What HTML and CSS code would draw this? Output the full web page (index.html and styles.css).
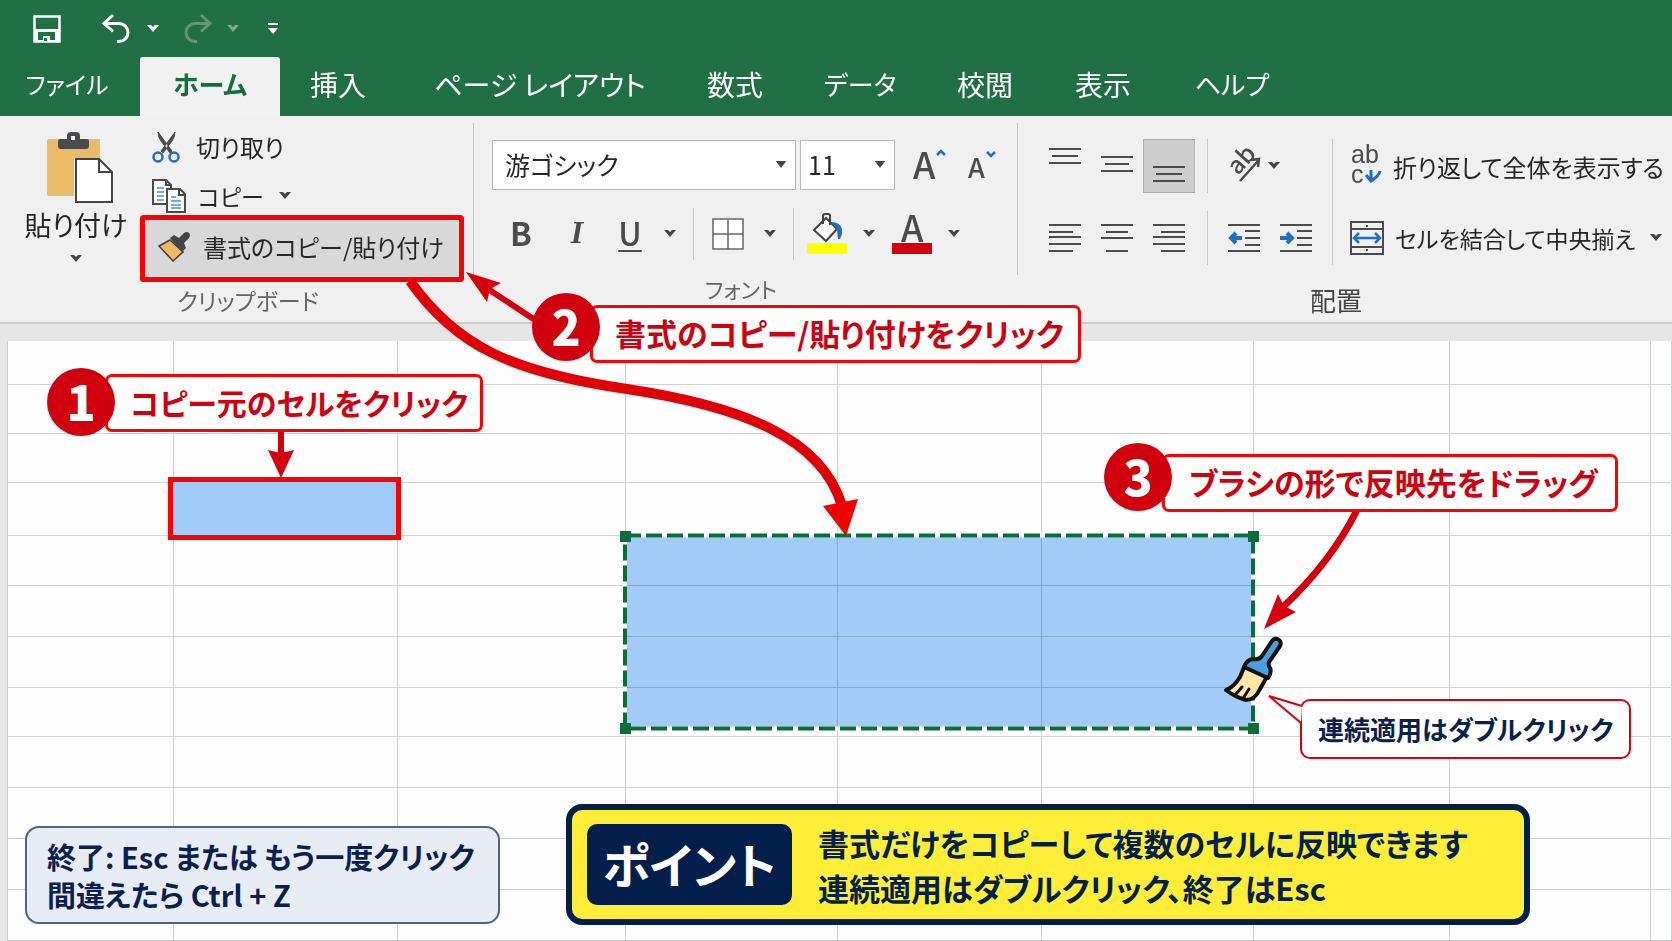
FILE: index.html
```html
<!DOCTYPE html>
<html lang="ja">
<head>
<meta charset="utf-8">
<title>書式のコピー/貼り付け</title>
<link rel="stylesheet" href="styles.css">
</head>
<body>
<div class="app">
  <header class="titlebar">
    <div class="quick">
      <button class="plain" aria-label="上書き保存"><svg width="30" height="30" viewBox="0 0 30 30"><path d="M2.500 2.500h25v25h-25z" fill="none" stroke="#fff" stroke-width="2.500"/><path d="M2 15h26v13H2z" fill="#fff"/><path d="M6 18h17v4H6zM6 22h5v4H6zM18 22h5v4h-5zM12 24h3v3h-3z" fill="#217045"/></svg></button>
      <button class="plain undo" aria-label="元に戻す"><svg width="30" height="30" viewBox="0 0 30 30" fill="none" stroke="#fff" stroke-width="3"><path d="M12 1 3 9.500l9 8M4 9.500h14a9 9 0 0 1 0 18h-2"/></svg></button>
      <button class="plain" aria-label="元に戻すの一覧"><svg class="chev" viewBox="0 0 12 8"><path d="M0 0h4l2 2 2-2h4L6 7z" fill="#fff"/></svg></button>
      <button class="plain redo" aria-label="やり直し"><svg width="30" height="30" viewBox="0 0 30 30" fill="none" stroke="#629777" stroke-width="3"><path d="m18 1 9 8.500-9 8M26 9.500H12a9 9 0 0 0 0 18h2"/></svg></button>
      <button class="plain" aria-label="やり直しの一覧"><svg class="chev" viewBox="0 0 12 8"><path d="M0 0h4l2 2 2-2h4L6 7z" fill="#7ba88d"/></svg></button>
      <button class="plain custom" aria-label="カスタマイズ"><svg width="12" height="12" viewBox="0 0 12 12" fill="#fff"><path d="M1 0h10v2H1zM1 5h10l-5 6z"/></svg></button>
    </div>
    <nav class="tabs">
      <a href="#" class="t1">ファイル</a><a href="#" class="active">ホーム</a><a href="#" class="t3">挿入</a><a href="#" class="t4">ページ レイアウト</a><a href="#" class="t5">数式</a><a href="#" class="t6">データ</a><a href="#" class="t7">校閲</a><a href="#" class="t8">表示</a><a href="#" class="t9">ヘルプ</a>
    </nav>
  </header>

  <section class="ribbon">
    <div class="group clipboard">
      <button class="paste"><svg width="68" height="72" viewBox="0 0 68 72"><path d="M3 8h50q1 0 1 1v18H28v38H3q-2 0-2-2V10q0-2 2-2z" fill="#eabb68"/><path d="M14 8h7V5q0-4 4-4h5q4 0 4 4v3h7q2 0 2 2v5q0 3-3 3H15q-3 0-3-3v-5q0-2 2-2z" fill="#4b4a4c"/><path d="M25 5h4v4h-4z" fill="#f0f0f0"/><path d="M30 28h23l13 13v30H30z" fill="#fff" stroke="#444" stroke-width="2"/><path d="M53 28v13h13" fill="none" stroke="#444" stroke-width="2"/></svg><span>貼り付け</span><svg class="chev" viewBox="0 0 12 8"><path d="M0 0h4l2 2 2-2h4L6 7z" fill="#444"/></svg></button>
      <div class="clips">
        <button class="clip cut"><svg width="28" height="32" viewBox="0 0 28 32"><path d="M6 1q0 5 3 9l9 12 2-2L6 1zM23 1q0 5-3 9l-9 12-2-2L23 1z" fill="#4b4b4b" stroke="#4b4b4b"/><circle cx="6" cy="26" r="4.500" fill="none" stroke="#1f70c1" stroke-width="2.500"/><circle cx="22" cy="26" r="4.500" fill="none" stroke="#1f70c1" stroke-width="2.500"/></svg>切り取り</button>
        <button class="clip copy"><svg width="34" height="34" viewBox="0 0 34 34" stroke="#4b4b4b" stroke-width="2"><path d="M1 1h13l5 5v19H1z" fill="#fff"/><path d="M14 1v5h5" fill="none"/><path d="M15 10h13l5 5v18H15z" fill="#fff"/><path d="M27 10v6h6" fill="none"/><path d="M5 9h7M5 13h7M5 17h7M5 21h7M19 18h5M19 22h10M19 26h10M19 29h10" stroke="#4a90d0" stroke-width="1.500"/></svg>コピー<svg class="chev" viewBox="0 0 12 8"><path d="M0 0h4l2 2 2-2h4L6 7z" fill="#444"/></svg></button>
        <button class="clip painter"><svg width="34" height="32" viewBox="0 0 34 32"><path d="m2 15 11-6 13 12-10 9z" fill="#edb964" stroke="#3d3d3d" stroke-width="1.500"/><path d="m13 7 4-3 5 3 5-5q3-2 5 0t0 5l-5 5 2 5-4 4z" fill="#454346"/></svg>書式のコピー/貼り付け</button>
      </div>
      <div class="label">クリップボード</div>
    </div>

    <div class="group font">
      <div class="row r1">
        <button class="combo name">游ゴシック<svg class="tri" viewBox="0 0 12 8"><path d="M0 0h12L6 8z" fill="#444"/></svg></button>
        <button class="combo size">11<svg class="tri" viewBox="0 0 12 8"><path d="M0 0h12L6 8z" fill="#444"/></svg></button>
        <button class="plain grow" aria-label="フォント サイズの拡大"><svg width="34" height="34" viewBox="0 0 34 34"><text x="1" y="31" font-size="36">A</text><path d="m25 7 4-4 4 4" fill="none" stroke="#1f70c1" stroke-width="2.500"/></svg></button>
        <button class="plain shrink" aria-label="フォント サイズの縮小"><svg width="30" height="30" viewBox="0 0 30 30"><text x="1" y="28" font-size="27">A</text><path d="m20 2 4 4 4-4" fill="none" stroke="#1f70c1" stroke-width="2.500"/></svg></button>
      </div>
      <div class="row r2">
        <button class="plain glyph bold">B</button>
        <button class="plain glyph ital">I</button>
        <button class="plain glyph under">U</button>
        <button class="plain c1" aria-label="下線の種類"><svg class="chev" viewBox="0 0 12 8"><path d="M0 0h4l2 2 2-2h4L6 7z" fill="#444"/></svg></button>
        <i class="sep"></i>
        <button class="plain grid" aria-label="罫線"><svg width="32" height="32" viewBox="0 0 32 32" fill="#fff" stroke="#666" stroke-width="1.500"><path d="M1 1h30v30H1zM16 1v30M1 16h30"/></svg></button>
        <button class="plain" aria-label="罫線の種類"><svg class="chev" viewBox="0 0 12 8"><path d="M0 0h4l2 2 2-2h4L6 7z" fill="#444"/></svg></button>
        <i class="sep"></i>
        <button class="plain fill" aria-label="塗りつぶしの色"><svg width="42" height="42" viewBox="0 0 42 42"><path d="M1 30h40v11H1z" fill="#ff0"/><path d="M8 17 20 5l11 11-11 12z" fill="#fff" stroke="#444" stroke-width="2"/><path d="M17 11V3q0-2 2-2h3q2 0 2 2v9" fill="none" stroke="#444" stroke-width="2"/><path d="M25 9q9 0 11 7v5l-2 5h-2l-1-10z" fill="#1f70c1"/></svg></button>
        <button class="plain" aria-label="塗りつぶしの色の一覧"><svg class="chev" viewBox="0 0 12 8"><path d="M0 0h4l2 2 2-2h4L6 7z" fill="#444"/></svg></button>
        <button class="plain color" aria-label="フォントの色"><svg width="42" height="42" viewBox="0 0 42 42"><text x="10" y="29" font-size="36">A</text><path d="M1 30h40v11H1z" fill="#d4000f"/></svg></button>
        <button class="plain" aria-label="フォントの色の一覧"><svg class="chev" viewBox="0 0 12 8"><path d="M0 0h4l2 2 2-2h4L6 7z" fill="#444"/></svg></button>
      </div>
      <div class="label">フォント</div>
    </div>

    <div class="group align">
      <div class="cols">
        <div class="aligns">
          <button class="plain box" aria-label="上揃え"><svg width="32" height="44" viewBox="0 0 32 44" stroke="#4b4b4b" stroke-width="2"><path d="M0 5h32M3 12h26M0 19h32"/></svg></button>
          <button class="plain box" aria-label="上下中央揃え"><svg width="32" height="44" viewBox="0 0 32 44" stroke="#4b4b4b" stroke-width="2"><path d="M0 13h32M4 20h24M0 27h32"/></svg></button>
          <button class="plain box on" aria-label="下揃え"><svg width="32" height="44" viewBox="0 0 32 44" stroke="#4b4b4b" stroke-width="2"><path d="M0 23h32M3 30h26M0 37h32"/></svg></button>
          <button class="plain box" aria-label="左揃え"><svg width="32" height="30" viewBox="0 0 32 30" stroke="#4b4b4b" stroke-width="2"><path d="M0 2h32M0 9h24M0 14h32M0 21h32M0 28h24"/></svg></button>
          <button class="plain box" aria-label="中央揃え"><svg width="32" height="30" viewBox="0 0 32 30" stroke="#4b4b4b" stroke-width="2"><path d="M0 2h32M5 9h22M0 15h32M5 28h22"/></svg></button>
          <button class="plain box" aria-label="右揃え"><svg width="32" height="30" viewBox="0 0 32 30" stroke="#4b4b4b" stroke-width="2"><path d="M0 2h32M8 9h24M0 14h32M0 21h32M8 28h24"/></svg></button>
        </div>
        <div class="indents">
          <div class="cell"><button class="plain" aria-label="方向"><svg width="34" height="34" viewBox="0 0 34 34"><text x="0" y="0" font-size="24" transform="translate(10 27) rotate(-48)">ab</text><path d="m12 32 18-20M23 11l8-1-1 8" fill="none" stroke="#4b4b4b" stroke-width="2.500"/></svg></button><button class="plain" aria-label="方向の一覧"><svg class="chev" viewBox="0 0 12 8"><path d="M0 0h4l2 2 2-2h4L6 7z" fill="#444"/></svg></button></div>
          <div class="cell low"><button class="plain" aria-label="インデントを減らす"><svg width="32" height="30" viewBox="0 0 32 30" fill="none" stroke="#4b4b4b" stroke-width="2"><path d="M0 2h32M17 8h15M17 15h15M17 22h15M0 28h32"/><path d="M14 15H2M8 10l-5 5 5 5" stroke="#1f70c1" stroke-width="4"/></svg></button><button class="plain" aria-label="インデントを増やす"><svg width="32" height="30" viewBox="0 0 32 30" fill="none" stroke="#4b4b4b" stroke-width="2"><path d="M0 2h32M17 8h15M17 15h15M17 22h15M0 28h32"/><path d="M0 15h12M7 10l5 5-5 5" stroke="#1f70c1" stroke-width="4"/></svg></button></div>
        </div>
        <div class="wraps">
          <button class="wide"><svg width="32" height="40" viewBox="0 0 32 40"><text class="abc" font-size="25"><tspan x="1" y="17">ab</tspan><tspan x="1" y="37">c</tspan></text><path d="M21 24v11M30 25q-1 5-9 10l-5-6" fill="none" stroke="#1f70c1" stroke-width="3"/></svg>折り返して全体を表示する</button>
          <button class="wide merge"><svg width="34" height="34" viewBox="0 0 34 34" fill="none" stroke="#4b4b4b" stroke-width="2"><path d="M1 1h32v32H1zM1 8h32M1 26h32M17 4v2M17 28v2"/><path d="M5 17h24M9 12l-5 5 5 5M25 12l5 5-5 5" stroke="#1f70c1" stroke-width="2.500"/></svg>セルを結合して中央揃え<svg class="chev" viewBox="0 0 12 8"><path d="M0 0h4l2 2 2-2h4L6 7z" fill="#444"/></svg></button>
        </div>
      </div>
      <div class="label dark">配置</div>
    </div>
  </section>

  <main class="sheet">
    <table class="cells" aria-label="ワークシート">
      <colgroup><col class="w1"><col class="w2"><col class="w3"><col class="w4"><col class="w5"><col class="w4"><col class="w6"><col class="w7"><col></colgroup>
      <tr class="h43"><td><td><td><td><td><td><td><td><td></tr>
      <tr class="h49"><td><td><td><td><td><td><td><td><td></tr>
      <tr class="h49"><td><td><td><td><td><td><td><td><td></tr>
      <tr class="h53"><td><td><td><td><td><td><td><td><td></tr>
      <tr class="h50"><td><td><td><td><td><td><td><td><td></tr>
      <tr class="h51"><td><td><td><td><td><td><td><td><td></tr>
      <tr class="h51"><td><td><td><td><td><td><td><td><td></tr>
      <tr class="h49"><td><td><td><td><td><td><td><td><td></tr>
      <tr class="h51"><td><td><td><td><td><td><td><td><td></tr>
      <tr class="h51"><td><td><td><td><td><td><td><td><td></tr>
      <tr class="h51"><td><td><td><td><td><td><td><td><td></tr>
      <tr class="h51"><td><td><td><td><td><td><td><td><td></tr>
    </table>
  </main>

  <div class="range"></div>
  <svg class="ink" width="1672" height="941" viewBox="0 0 1672 941" aria-hidden="true">
    <rect x="625" y="535.500" width="628" height="193" fill="none" stroke="#fff" stroke-width="4"/>
    <rect x="625" y="535.500" width="628" height="193" fill="none" stroke="#0a6d3a" stroke-width="4" stroke-dasharray="16 5"/>
    <path d="M620 531h11v11h-11zM1248 531h11v11h-11zM620 723h11v11h-11zM1248 723h11v11h-11z" fill="#0a6d3a"/>
    <rect x="170.500" y="479.500" width="228" height="58" fill="#a1cbf7" stroke="#f00" stroke-width="5"/>
    <rect x="142.500" y="217.500" width="319" height="62" rx="1" fill="none" stroke="#f00" stroke-width="5"/>
    <path d="M410 281C455 345 510 372 627 389 740 406 822 437 842 506" fill="none" stroke="#df0008" stroke-width="10"/>
    <path d="m823 506 35-7-12 37z" fill="#f00000"/>
    <path d="m488 289 50 33" stroke="#d4000f" stroke-width="6"/>
    <path d="m466 272 35 11-11 6-3 13z" fill="#d4000f"/>
    <path d="M281 430v24" stroke="#d4000f" stroke-width="6"/>
    <path d="m268 450 13 3 13-3-13 28z" fill="#d4000f"/>
    <path d="M1357 510q-26 52-74 97" fill="none" stroke="#d4000f" stroke-width="7"/>
    <path d="m1264 629 14-35 6 12 12 6z" fill="#d4000f"/>
  </svg>

  <div class="callout one"><b>1</b><span>コピー元のセルをクリック</span></div>
  <div class="callout two"><b>2</b><span>書式のコピー/貼り付けをクリック</span></div>
  <div class="callout three"><b>3</b><span>ブラシの形で反映先をドラッグ</span></div>

  <div class="bubble">連続適用はダブルクリック<svg width="36" height="32" viewBox="0 0 36 32"><path d="M35 12 2 2l32 27" fill="#fff" stroke="#d4000f" stroke-width="2"/></svg></div>
  <svg class="brush" width="60" height="68" viewBox="0 0 60 68" stroke="#111" stroke-linejoin="round" stroke-linecap="round"><path d="M22 29 17 41Q11 51 3 54q9 7 20 10 9 0 14-11l8-14z" fill="#fbe6a5" stroke-width="4"/><path d="m13 58 6-7M21 61l5-8" fill="none" stroke-width="3"/><path d="M21 31q3-8 10-8 5 1 8-3L49 5q3-4 7-1 3 2 1 6L46 26q-1 3 1 6 2 4-2 10z" fill="#4a9fe3" stroke-width="4"/></svg>

  <aside class="note">終了: Esc または もう一度クリック<br>間違えたら Ctrl + Z</aside>
  <aside class="point"><strong>ポイント</strong><p>書式だけをコピーして複数のセルに反映できます<br>連続適用はダブルクリック、終了はEsc</p></aside>
</div>
</body>
</html>
```
FILE: styles.css
```css
* { box-sizing: border-box; }
body { margin: 0; background: #e6e6e6; color: #262626; font-family: "Noto Sans CJK JP", "Noto Sans", sans-serif; font-feature-settings: "palt"; }
button { font: inherit; font-feature-settings: inherit; color: inherit; background: none; border: 0; padding: 0; cursor: pointer; }
svg { display: block; flex: none; overflow: visible; }
svg text { fill: #4b4b4b; font-family: "Noto Sans CJK JP", sans-serif; font-weight: 500; }
svg .abc { font-family: "Liberation Sans", sans-serif; }
.app { position: relative; min-height: 100vh; overflow: hidden; display: flex; flex-direction: column; }
.plain { display: flex; align-items: center; justify-content: center; }
.chev { width: 12px; height: 8px; }
.tri { width: 12px; height: 7px; margin-left: auto; }

.titlebar { background: #217045; color: #fff; }
.quick { display: flex; align-items: center; height: 57px; padding-left: 32px; }
.undo { margin: 0 16px 0 39px; }
.redo { margin: 0 14px 0 24px; }
.custom { margin-left: 28px; }
.tabs { display: flex; height: 59px; font-size: 26px; }
.tabs a { display: flex; align-items: center; justify-content: center; padding-bottom: 6px; color: inherit; text-decoration: none; white-space: nowrap; }
.tabs .active { width: 140px; background: #f1f1f1; color: #12703f; font-weight: 700; border-radius: 3px 3px 0 0; }
.tabs .t1 { width: 140px; padding-right: 6px; font-size: 24px; }
.t3 { width: 116px; }
.t4 { width: 288px; }
.t5 { width: 102px; }
.t6 { width: 148px; }
.t7 { width: 102px; }
.t8 { width: 134px; }
.t9 { width: 124px; }
.t3, .t4, .t5, .t7, .t8 { font-size: 28px; }

.ribbon { display: flex; height: 208px; background: #f0f0f0; border-bottom: 2px solid #c8c8c8; }
.group { position: relative; display: flex; flex-direction: column; }
.group::after { content: ""; position: absolute; right: 0; top: 7px; width: 1px; height: 152px; background: #c4c4c4; }
.label { position: absolute; bottom: 6px; left: 0; right: 0; text-align: center; font-size: 23px; line-height: 32px; color: #666; }
.label.dark { color: #444; font-size: 26px; }
.clipboard { flex-direction: row; width: 474px; }
.clipboard .label { padding-left: 22px; }
.paste { display: flex; flex-direction: column; align-items: center; width: 140px; padding: 15px 0 0 12px; font-size: 27px; line-height: 36px; }
.paste span { margin-top: 4px; }
.paste svg:first-child { margin-left: 8px; }
.paste .chev { margin-top: 12px; }
.clips { display: flex; flex-direction: column; padding-top: 6px; }
.clip { display: flex; align-items: center; font-size: 24px; white-space: nowrap; height: 49px; }
.cut, .copy { padding-left: 12px; gap: 16px; }
.copy { gap: 12px; font-size: 23px; }
.copy .chev { margin-left: 3px; }
.painter { height: 57px; width: 316px; margin-left: 3px; padding: 0 0 4px 14px; gap: 12px; background: #d8d8d8; }

.font { width: 544px; padding: 24px 0 0 18px; }
.row { display: flex; align-items: center; }
.combo { display: flex; align-items: center; height: 50px; background: #fff; border: 1px solid #bbb; font-size: 25px; padding: 0 8px 2px 12px; }
.name { width: 304px; }
.size { width: 95px; margin-left: 4px; padding-left: 7px; }
.grow { margin-left: 17px; }
.shrink { margin-left: 21px; }
.r2 { height: 52px; margin-top: 18px; }
.glyph { font: 700 32px/40px "Noto Sans CJK JP", sans-serif; color: #4b4b4b; width: 24px; padding-bottom: 4px; }
.bold { margin-left: 17px; }
.ital { font-family: "Liberation Serif", serif; font-style: italic; margin-left: 32px; }
.under { text-decoration: underline; text-decoration-thickness: 2px; text-underline-offset: 4px; margin-left: 29px; font-weight: 500; }
.c1 { margin-left: 22px; }
.sep { width: 1px; height: 52px; background: #c4c4c4; margin: 0 18px 0 17px; }
.fill { margin-left: -6px; }
.fill, .color { margin-right: 15px; }
.color { margin-left: 16px; }
.grid { margin-right: 20px; }
.font .label { bottom: 18px; padding-right: 10px; font-size: 22px; }

.align { flex: 1; padding: 23px 0 0 21px; }
.align::after { display: none; }
.cols { display: flex; }
.aligns { display: grid; grid-template-columns: 52px 52px 52px; grid-template-rows: 54px 54px; row-gap: 18px; }
.box { height: 54px; }
.on { background: #cdcdcd; border: 1px solid #b0b0b0; }
.indents { margin-left: 12px; width: 125px; display: grid; row-gap: 18px; grid-template-rows: 54px 54px; }
.cell { display: flex; align-items: center; gap: 6px; padding-left: 20px; border-left: 1px solid #c8c8c8; }
.low { gap: 20px; }
.wraps { border-left: 1px solid #c8c8c8; display: grid; grid-template-rows: 54px 54px; row-gap: 18px; padding-left: 17px; }
.wide { display: flex; align-items: center; gap: 11px; font-size: 24px; white-space: nowrap; }
.merge { font-size: 23px; }
.merge .chev { margin-left: 4px; }
.align .label { padding-right: 18px; }

.sheet { margin: 17px 0 0 7px; background: #fdfdfd; flex: 1; border-left: 1px solid #ccc; }
.cells { width: 100%; table-layout: fixed; border-collapse: collapse; }
.cells td { padding: 0; border-right: 1px solid #d0d2d2; border-bottom: 1px solid #d0d2d2; }
.w1 { width: 165px; }
.w2 { width: 224px; }
.w3 { width: 228px; }
.w4 { width: 212px; }
.w5 { width: 204px; }
.w6 { width: 196px; }
.w7 { width: 201px; }
.h43 { height: 43px; }
.h49 { height: 49px; }
.h50 { height: 50px; }
.h51 { height: 51px; }
.h53 { height: 53px; }

.range { position: absolute; left: 626px; top: 536px; width: 627px; height: 192px; background: #a3cdf9; mix-blend-mode: multiply; }
.ink { position: absolute; left: 0; top: 0; pointer-events: none; }
.callout { position: absolute; display: flex; align-items: flex-start; color: #d0000f; font-weight: 700; font-size: 31px; white-space: nowrap; }
.callout b { width: 68px; height: 68px; border-radius: 50%; background: #d0000f; color: #fff; font-size: 48px; line-height: 64px; text-align: center; z-index: 1; }
.callout span { height: 58px; line-height: 50px; margin: 12px 0 0 -10px; padding: 0 14px 0 22px; background: #fff; border: 3px solid #f00; border-radius: 7px; }
.one { left: 47px; top: 368px; font-size: 30px; }
.one span { margin-top: 6px; padding-right: 12px; }
.two { left: 532px; top: 293px; }
.three { left: 1104px; top: 443px; }
.three span { margin-top: 11px; padding: 0 17px 0 24px; }
.bubble { position: absolute; left: 1300px; top: 699px; height: 60px; padding: 0 16px; line-height: 56px; font-size: 26px; font-weight: 700; color: #0a2150; background: #fff; border: 2px solid #d4000f; border-radius: 10px; white-space: nowrap; }
.bubble svg { position: absolute; left: -35px; top: -7px; }
.brush { position: absolute; left: 1223px; top: 636px; }
.note { position: absolute; left: 25px; top: 826px; width: 475px; padding: 9px 20px; font-size: 29px; line-height: 38px; font-weight: 700; color: #0a2150; background: #e7ecf5; border: 2px solid #52647c; border-radius: 14px; white-space: nowrap; }
.point { position: absolute; left: 566px; top: 804px; width: 964px; height: 121px; display: flex; align-items: center; gap: 26px; padding: 0 15px; background: #ffee37; border: 6px solid #041f4b; border-radius: 16px; color: #041f4b; white-space: nowrap; }
.point strong { width: 205px; height: 81px; border-radius: 10px; background: #041f4b; color: #fff; font-size: 48px; line-height: 78px; text-align: center; }
.point p { margin: 0; font-size: 31px; line-height: 45px; font-weight: 700; }
```
